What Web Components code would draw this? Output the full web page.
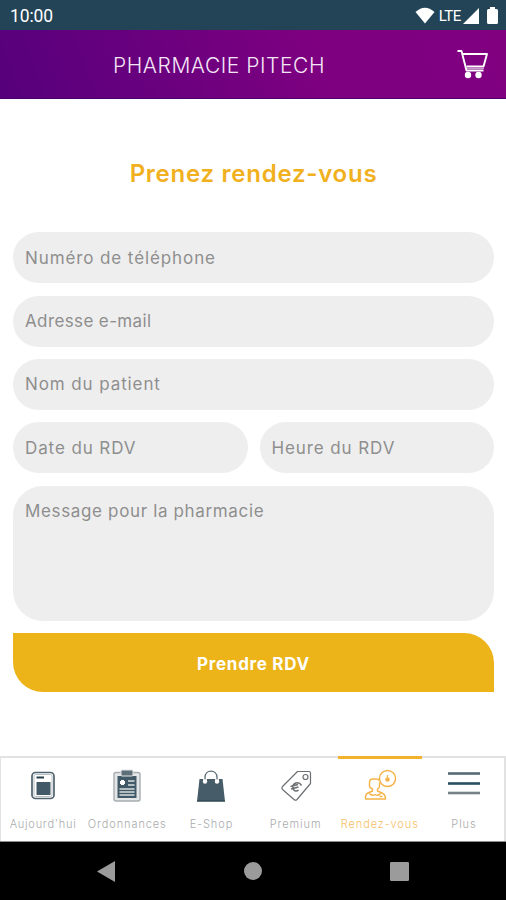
<!DOCTYPE html>
<html lang="fr">
<head>
<meta charset="utf-8">
<title>Pharmacie Pitech</title>
<style>
  body {
    margin: 0;
    background: #fff;
    font-family: Inter, "Open Sans", sans-serif;
  }
</style>
</head>
<body>
<pharmacy-app></pharmacy-app>

<script>
class StatusBar extends HTMLElement {
  constructor() {
    super();
    this.attachShadow({ mode: "open" });
    this.shadowRoot.innerHTML = `
    <style>
      :host {
        display: flex;
        align-items: center;
        justify-content: space-between;
        box-sizing: border-box;
        height: 30px;
        padding: 1px 8px 0 10px;
        background: #234457;
        color: #fff;
        font-family: Roboto, sans-serif;
      }
      .time { font-size: 17.5px; letter-spacing: -0.1px; }
      .icons { display: flex; align-items: center; }
      .lte { font-size: 15px; margin: 0 2px 0 4px; letter-spacing: -0.4px; }
      svg { display: block; fill: #fff; }
      .battery { margin-left: 8px; }
    </style>
    <span class="time"><slot></slot></span>
    <div class="icons">
      <svg width="20" height="17" viewBox="0 0 20 17"><path d="M0.5 5 Q10 -3.6 19.5 5 L10 16.5 Z"/></svg>
      <span class="lte">LTE</span>
      <svg width="16" height="16" viewBox="0 0 16 16"><path d="M16 0 V16 H0 Z"/></svg>
      <svg class="battery" width="11" height="17" viewBox="0 0 11 17"><path d="M3 0h5v2h1.500q1.500 0 1.500 1.500V15.500q0 1.500-1.500 1.500h-8Q0 17 0 15.500V3.500Q0 2 1.500 2H3z"/></svg>
    </div>
    `;
  }
}

class AppHeader extends HTMLElement {
  constructor() {
    super();
    this.attachShadow({ mode: "open" });
    this.shadowRoot.innerHTML = `
    <style>
      :host {
        display: grid;
        grid-template-columns: 48px 1fr 48px;
        align-items: center;
        box-sizing: border-box;
        height: 69px;
        padding: 0 10px;
        background: linear-gradient(70deg, #56007c 0%, #7d0080 62%, #800080 100%);
        border-bottom: 1px solid #4c006c;
        color: #f5e6f7;
      }
      .title {
        grid-column: 2;
        justify-self: center;
        margin: 3px 68px 0 0;
        font-size: 21px;
        font-weight: 300;
        letter-spacing: 0.55px;
        white-space: nowrap;
      }
      svg { display: block; margin-left: 9px; }
    </style>
    <span class="title"><slot></slot></span>
    <svg width="32" height="30" viewBox="0 0 32 30" fill="none" stroke="#fff" stroke-width="1.900">
      <path d="M0.500 2H4.500L9.500 21.500H26.500" stroke-linejoin="round"/>
      <path d="M5.500 5H30L26.500 17.500H9.500" stroke-linejoin="round"/>
      <path d="M8.500 19.500H27" stroke-width="1" opacity=".6"/>
      <circle cx="11" cy="26" r="3.200" fill="#fff" stroke="none"/>
      <circle cx="21.500" cy="26" r="3.200" fill="#fff" stroke="none"/>
    </svg>
    `;
  }
}

class FormField extends HTMLElement {
  constructor() {
    super();
    this.attachShadow({ mode: "open" });
    this.shadowRoot.innerHTML = `
    <style>
      :host {
        display: flex;
        align-items: center;
        flex: 1;
        box-sizing: border-box;
        min-height: 51px;
        padding: 0 12px;
        border-radius: 30px;
        background: #eee;
        color: #8e8e8e;
        font-size: 17px;
        letter-spacing: var(--spacing, 0.9px);
        white-space: nowrap;
      }
      :host([multiline]) {
        align-items: flex-start;
        min-height: 135px;
        padding-top: 15px;
      }
    </style>
    <slot></slot>
    `;
  }
}

class SubmitButton extends HTMLElement {
  constructor() {
    super();
    this.attachShadow({ mode: "open" });
    this.shadowRoot.innerHTML = `
    <style>
      :host { display: flex; }
      button {
        flex: 1;
        height: 58.500px;
        border: 0;
        padding: 3px 0 0;
        border-radius: 0 30px 0 30px;
        background: #ecb418;
        color: #fff;
        font: 700 17px Inter, "Open Sans", sans-serif;
        letter-spacing: 0.7px;
      }
    </style>
    <button type="button"><slot></slot></button>
    `;
  }
}

const tabIcons = {
  today: `
    <rect x="5" y="4.500" width="22" height="26" rx="3.500" fill="#fff" stroke="#50636e" stroke-width="1.700"/>
    <rect x="7" y="6.500" width="18" height="22" rx="1.500" fill="none" stroke="#b6bec2" stroke-width="1"/>
    <path d="M9.500 9.500H17" stroke="#263e4b" stroke-width="2"/>
    <rect x="9.500" y="14" width="14" height="13" fill="#425a67"/>`,
  orders: `
    <rect x="3" y="4.500" width="26" height="28.500" rx="2" fill="#e4e6e7" stroke="#a6adb1" stroke-width="1.400"/>
    <rect x="6.500" y="8" width="19" height="22" fill="#425a67"/>
    <rect x="10" y="2" width="12" height="6" rx="1" fill="#5d6f79" stroke="#e4e6e7"/>
    <path d="M9 14.500h5M11.500 12v5" stroke="#fff" stroke-width="3"/>
    <path d="M17 13h6.500M17 17h6.500M8.500 21h15M8.500 24h15M8.500 27h15" stroke="#d8dee1" stroke-width="1.300"/>`,
  shop: `
    <path d="M4.500 11H27.500L30 33.500H2z" fill="#465c68"/>
    <path d="M2 33H30" stroke="#283e49" stroke-width="1"/>
    <path d="M10 14V9.500C10 1 22 1 22 9.500V14" fill="none" stroke="#fff" stroke-width="3.600"/>
    <path d="M10 13.500V9.500C10 1 22 1 22 9.500V13.500" fill="none" stroke="#596b75" stroke-width="1.300"/>
    <circle cx="10" cy="13.500" r="2.200" fill="#fff"/><circle cx="22" cy="13.500" r="2.200" fill="#fff"/>`,
  premium: `
    <g fill="none" stroke="#6c6f72" stroke-width="1.200" stroke-linejoin="round">
      <path d="M17.500 3.500H29Q30.500 3.500 30.500 5V15.500L17 31.500Q15.500 33 14 31.500L2.500 21.500Q1.200 20 2.500 18.500z"/>
      <circle cx="25.500" cy="9" r="2.500"/>
      <path d="M21.500 17.500C18.500 12.500 12 15 13 20.500C14 23.500 17 23.500 18.500 22M10.500 18.500L18 16.500M11 21L18.500 19" stroke-width="1.500"/>
    </g>`,
  booking: `
    <g fill="none" stroke="#f5b347" stroke-width="1.400" stroke-linejoin="round">
      <circle cx="23.500" cy="10.500" r="8"/>
      <path d="M23.500 7V9.500" stroke-width="1.200"/>
      <circle cx="23.500" cy="11.500" r="1.600" fill="#f5b347"/>
      <path d="M15.500 12.500Q14.500 11 12 11H9Q5.500 11 5.500 14.500V19M15.500 14.500V18Q15.500 20.500 13.500 21V23L18 25Q21.500 26.500 21.500 31H1.500Q1 26.500 4 25L8.500 23V21Q5.500 20 5.500 17.500"/>
      <path d="M5.500 25.500Q7.500 28.500 11 26.500Q14.500 28.500 16.500 25.500M15.500 28.500h3"/>
    </g>`,
  more: `
    <path d="M0 5.500H32" stroke="#566b77" stroke-width="2.600"/>
    <path d="M0 15.500H32" stroke="#294e63" stroke-width="2.600"/>
    <path d="M0 25H32" stroke="#748187" stroke-width="2.600"/>`
};

class TabItem extends HTMLElement {
  constructor() {
    super();
    this.attachShadow({ mode: "open" });
  }

  connectedCallback() {
    this.shadowRoot.innerHTML = `
    <style>
      :host {
        display: flex;
        flex: 1 1 0;
        min-width: 0;
        flex-direction: column;
        align-items: center;
        box-sizing: border-box;
        border-top: 2px solid #e2e2e2;
        padding-top: 10px;
        color: #a9abad;
        font-size: 11px;
        font-weight: 300;
        white-space: nowrap;
      }
      :host([active]) {
        border-top: 3px solid #f3b22d;
        padding-top: 9px;
        color: #f6c069;
      }
      svg { display: block; flex: none; }
      span { margin-top: 14px; line-height: 16px; letter-spacing: var(--spacing, 0.9px); }
    </style>
    <svg width="32" height="34" viewBox="0 0 32 34">${tabIcons[this.getAttribute("icon")]}</svg>
    <span><slot></slot></span>
    `;
  }
}

class TabBar extends HTMLElement {
  constructor() {
    super();
    this.attachShadow({ mode: "open" });
    this.shadowRoot.innerHTML = `
    <style>
      :host {
        display: flex;
        box-sizing: border-box;
        height: 86px;
        padding-left: 1px;
        background: linear-gradient(#e2e2e2, #e2e2e2) left / 1px 100% no-repeat,
          linear-gradient(#e2e2e2, #e2e2e2) right / 2px 100% no-repeat, #fff;
        border-bottom: 1px solid #8c8c8c;
      }
    </style>
    <slot></slot>
    `;
  }
}

class SystemNav extends HTMLElement {
  constructor() {
    super();
    this.attachShadow({ mode: "open" });
    this.shadowRoot.innerHTML = `
    <style>
      :host {
        display: flex;
        align-items: center;
        justify-content: space-between;
        box-sizing: border-box;
        height: 58px;
        padding: 0 97px;
        background: #000;
      }
      svg { display: block; fill: #9b9b9b; }
    </style>
    <svg width="18" height="21" viewBox="0 0 18 21"><path d="M18 0V21L0 10.500z"/></svg>
    <svg width="18" height="18" viewBox="0 0 18 18"><circle cx="9" cy="9" r="9"/></svg>
    <svg width="19" height="19" viewBox="0 0 19 19"><rect width="19" height="19" rx="1.200"/></svg>
    `;
  }
}

class PharmacyApp extends HTMLElement {
  constructor() {
    super();
    this.attachShadow({ mode: "open" });
    this.shadowRoot.innerHTML = `
    <style>
      :host {
        display: flex;
        flex-direction: column;
        width: 506px;
        height: 900px;
        overflow: hidden;
      }
      main {
        flex: 1;
        padding: 58px 12px 0 13px;
      }
      h1 {
        margin: 0 0 42.200px;
        color: #f1b01e;
        font-size: 24px;
        font-weight: 600;
        line-height: 33px;
        letter-spacing: 0.75px;
        text-align: center;
      }
      .form { display: flex; flex-direction: column; gap: 12.400px; }
      .row { display: flex; gap: 12px; }
      .mail { --spacing: 0.38px; }
      .message { --spacing: 0.65px; }
      .tight { --spacing: 0.75px; }
    </style>
    <status-bar>10:00</status-bar>
    <app-header>PHARMACIE PITECH</app-header>
    <main>
      <h1>Prenez rendez-vous</h1>
      <div class="form">
        <form-field>Numéro de téléphone</form-field>
        <form-field class="mail">Adresse e-mail</form-field>
        <form-field>Nom du patient</form-field>
        <div class="row">
          <form-field>Date du RDV</form-field>
          <form-field>Heure du RDV</form-field>
        </div>
        <form-field class="message" multiline>Message pour la pharmacie</form-field>
        <submit-button>Prendre RDV</submit-button>
      </div>
    </main>
    <tab-bar>
      <tab-item icon="today" class="tight">Aujourd'hui</tab-item>
      <tab-item icon="orders">Ordonnances</tab-item>
      <tab-item icon="shop">E-Shop</tab-item>
      <tab-item icon="premium">Premium</tab-item>
      <tab-item icon="booking" active>Rendez-vous</tab-item>
      <tab-item icon="more">Plus</tab-item>
    </tab-bar>
    <system-nav></system-nav>
    `;
  }
}

customElements.define("status-bar", StatusBar);
customElements.define("app-header", AppHeader);
customElements.define("form-field", FormField);
customElements.define("submit-button", SubmitButton);
customElements.define("tab-item", TabItem);
customElements.define("tab-bar", TabBar);
customElements.define("system-nav", SystemNav);
customElements.define("pharmacy-app", PharmacyApp);
</script>
</body>
</html>
